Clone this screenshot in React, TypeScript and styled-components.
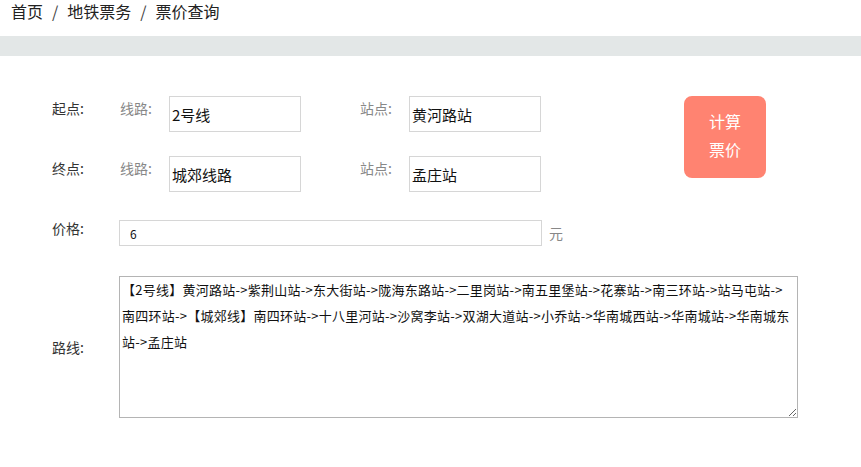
import React from "react";
import styled, { createGlobalStyle } from "styled-components";

const Global = createGlobalStyle`
  html, body { margin: 0; padding: 0; background: #fff; }
  body { font-family: "Noto Sans CJK SC", "Noto Sans", sans-serif; color: #333; }
  * { box-sizing: border-box; }
`;

const Page = styled.div`
  width: 861px;
  height: 467px;
  overflow: hidden;
`;

const Breadcrumb = styled.div`
  height: 36px;
  padding: 0 0 0 11px;
  font-size: 16px;
  line-height: 23px;
  color: #222;
  display: flex;
  gap: 9px;
`;

const Sep = styled.span`
  color: #444;
`;

const GrayBar = styled.div`
  height: 20px;
  background: #e3e7e7;
`;

const Form = styled.div`
  padding: 40px 0 0 52px;
  display: flex;
  flex-direction: column;
`;

const Top = styled.div`
  display: flex;
  align-items: flex-start;
`;

const Rows = styled.div`
  display: flex;
  flex-direction: column;
  gap: 24px;
`;

const Row = styled.div`
  display: flex;
  align-items: center;
  height: 36px;
`;

const Label = styled.span<{ $w: number; $raise?: number }>`
  width: ${(p) => p.$w}px;
  font-size: 14px;
  color: #333;
  flex-shrink: 0;
  padding-bottom: ${(p) => p.$raise ?? 0}px;
`;

const SubLabel = styled.span<{ $w: number }>`
  width: ${(p) => p.$w}px;
  font-size: 14px;
  color: #888;
  flex-shrink: 0;
  padding-bottom: 13px;
`;

const Input = styled.input`
  width: 132px;
  height: 36px;
  border: 1px solid #d6d6d6;
  padding: 0 2px;
  font-size: 15px;
  color: #111;
  font-family: inherit;
  outline: none;
`;

const Gap = styled.div<{ $w: number }>`
  width: ${(p) => p.$w}px;
  flex-shrink: 0;
`;

const CalcButton = styled.button`
  margin-left: 143px;
  width: 82px;
  height: 82px;
  border: none;
  border-radius: 8px;
  background: #ff8371;
  color: #fff;
  font-size: 16px;
  line-height: 28px;
  font-family: inherit;
  padding: 0 24px 4px;
  cursor: pointer;
`;

const PriceRow = styled.div`
  display: flex;
  align-items: center;
  margin-top: 28px;
  height: 26px;
`;

const PriceInput = styled.input`
  width: 423px;
  height: 26px;
  border: 1px solid #d6d6d6;
  padding: 0 10px;
  font-size: 12px;
  color: #111;
  font-family: inherit;
  outline: none;
`;

const Unit = styled.span`
  margin-left: 7px;
  font-size: 14px;
  color: #888;
`;

const RouteRow = styled.div`
  display: flex;
  align-items: center;
  margin-top: 30px;
`;

const RouteArea = styled.textarea`
  width: 679px;
  height: 142px;
  border: 1px solid #b4b4b4;
  padding: 0 3px 0 2px;
  font-size: 13px;
  letter-spacing: 0.25px;
  line-height: 26px;
  color: #111;
  font-family: inherit;
  resize: both;
  outline: none;
`;

const route =
  "【2号线】黄河路站->紫荆山站->东大街站->陇海东路站->二里岗站->南五里堡站->花寨站->南三环站->站马屯站->南四环站->【城郊线】南四环站->十八里河站->沙窝李站->双湖大道站->小乔站->华南城西站->华南城站->华南城东站->孟庄站";

export default function App() {
  return (
    <Page>
      <Global />
      <Breadcrumb>
        <span>首页</span>
        <Sep>/</Sep>
        <span>地铁票务</span>
        <Sep>/</Sep>
        <span>票价查询</span>
      </Breadcrumb>
      <GrayBar />
      <Form>
        <Top>
          <Rows>
            <Row>
              <Label $w={68} $raise={12}>起点:</Label>
              <SubLabel $w={49}>线路:</SubLabel>
              <Input defaultValue="2号线" />
              <Gap $w={59} />
              <SubLabel $w={49}>站点:</SubLabel>
              <Input defaultValue="黄河路站" />
            </Row>
            <Row>
              <Label $w={68} $raise={12}>终点:</Label>
              <SubLabel $w={49}>线路:</SubLabel>
              <Input defaultValue="城郊线路" />
              <Gap $w={59} />
              <SubLabel $w={49}>站点:</SubLabel>
              <Input defaultValue="孟庄站" />
            </Row>
          </Rows>
          <CalcButton>计算票价</CalcButton>
        </Top>
        <PriceRow>
          <Label $w={67} $raise={10}>价格:</Label>
          <PriceInput defaultValue="6" />
          <Unit>元</Unit>
        </PriceRow>
        <RouteRow>
          <Label $w={67}>路线:</Label>
          <RouteArea defaultValue={route} />
        </RouteRow>
      </Form>
    </Page>
  );
}
